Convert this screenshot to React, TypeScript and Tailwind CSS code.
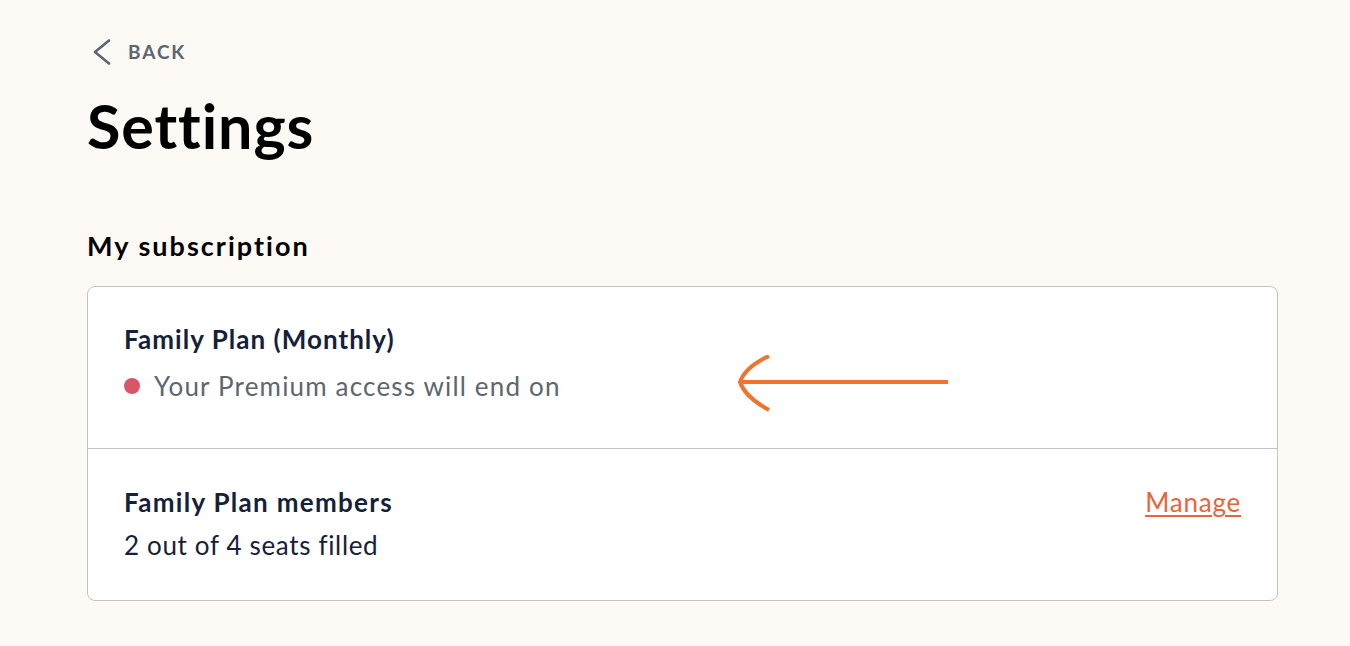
const font = { fontFamily: "Lato, 'Noto Sans', sans-serif" }

function Chevron() {
  return (
    <svg width="20" height="26" viewBox="0 0 20 26" fill="none" className="ml-[5px]">
      <path d="M17 1.5 L3 13 L17 24.5" stroke="#5c6670" strokeWidth="2.6" strokeLinecap="round" strokeLinejoin="round" />
    </svg>
  )
}

function Arrow() {
  return (
    <svg
      className="absolute left-[648px] top-[68px]"
      width="214"
      height="58"
      viewBox="0 0 214 58"
      fill="none"
    >
      <path d="M3 27 H212" stroke="#ed7530" strokeWidth="4" />
      <path d="M33 1 Q9 12 4 27 Q9 42 33 55" stroke="#ed7530" strokeWidth="4" />
    </svg>
  )
}

export default function App() {
  return (
    <div className="min-h-[646px] w-full bg-[#fdfaf5] pl-[87px] pr-[72px] pt-[39px]" style={font}>
      <button className="flex h-[26px] items-center gap-[16px] text-[#5c6670]">
        <Chevron />
        <span className="text-[19px] font-bold leading-[24px] tracking-[0.1em]">BACK</span>
      </button>
      <h1 className="mt-[30px] text-[61px] font-bold leading-none tracking-[0.015em] text-black">Settings</h1>

      <h2 className="mt-[74px] text-[27px] font-bold leading-[32px] tracking-[0.075em] text-black">
        My subscription
      </h2>

      <div className="mt-[24px] rounded-lg border border-[#c4c4c4] bg-white">
        <div className="relative border-b border-[#c4c4c4] px-[36px] pb-[46px] pt-[36px]">
          <div className="text-[26px] font-bold leading-[32px] tracking-[0.04em] text-[#15213a]">
            Family Plan (Monthly)
          </div>
          <div className="mt-[15px] flex items-center gap-[14px]">
            <span className="h-[16px] w-[16px] rounded-full bg-[#d9566a]" />
            <span className="text-[26px] leading-[32px] tracking-[0.045em] text-[#5c6670]">
              Your Premium access will end on
            </span>
          </div>
          <Arrow />
        </div>
        <div className="flex items-start justify-between pb-[39px] pl-[36px] pr-[36px] pt-[37px]">
          <div>
            <div className="text-[26px] font-bold leading-[32px] tracking-[0.05em] text-[#15213a]">
              Family Plan members
            </div>
            <div className="mt-[11px] text-[26px] leading-[32px] tracking-[0.025em] text-[#15213a]">
              2 out of 4 seats filled
            </div>
          </div>
          <a
            href="#"
            className="text-[26px] leading-[32px] tracking-[0.03em] text-[#e8643a] underline decoration-2 underline-offset-[3px]"
          >
            Manage
          </a>
        </div>
      </div>
    </div>
  )
}
